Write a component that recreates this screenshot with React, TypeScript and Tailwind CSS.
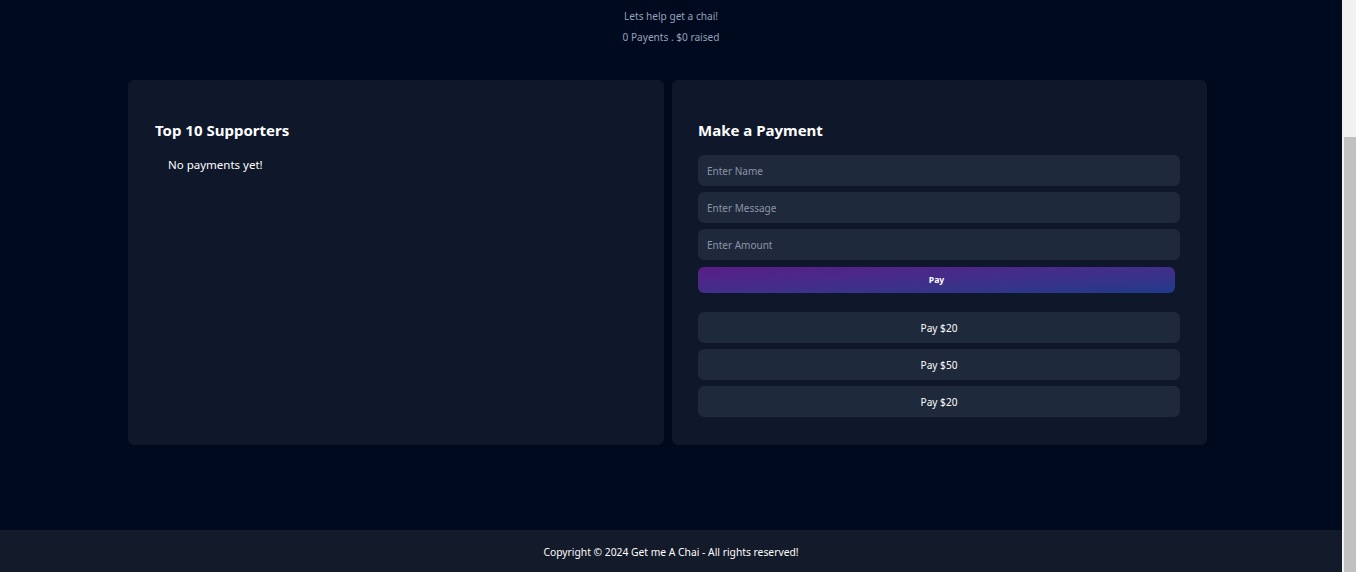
const font = { fontFamily: '"Noto Sans", "Open Sans", sans-serif' };

function Input({ placeholder }: { placeholder: string }) {
  return (
    <input
      placeholder={placeholder}
      className="w-full h-[31px] rounded-md bg-[#1e293b] px-[9px] text-[10px] text-white placeholder:text-[#8b95a5] outline-none"
    />
  );
}

function AmountButton({ label }: { label: string }) {
  return (
    <button className="w-full h-[31px] pt-[2px] rounded-md bg-[#1e293b] text-[10.1px] text-white">
      {label}
    </button>
  );
}

export default function App() {
  return (
    <div className="h-screen w-full flex overflow-hidden" style={font}>
      <div className="flex-1 flex flex-col bg-[#000a1f]">
        <div className="flex flex-col items-center text-[10.1px] text-[#94a3b8] pt-[8px] gap-[4px]">
          <p className="leading-[17px]">Lets help get a chai!</p>
          <p className="leading-[17px]">0 Payents . $0 raised</p>
        </div>

        <div className="flex gap-2 pl-[128px] mt-[34px]">
          <div className="w-[536px] h-[365px] rounded-md bg-[#0f172a] px-[27px] pt-[39px]">
            <h2 className="text-[15px] font-bold text-white leading-[22px]">Top 10 Supporters</h2>
            <ul className="pl-[13px] mt-[14px]">
              <li className="text-[11.5px] text-white leading-[20px]">No payments yet!</li>
            </ul>
          </div>

          <div className="w-[535px] h-[365px] rounded-md bg-[#0f172a] pl-[26px] pr-[27px] pt-[39px]">
            <h2 className="text-[15px] font-bold text-white leading-[22px]">Make a Payment</h2>
            <div className="flex flex-col gap-[6px] mt-[14px]">
              <Input placeholder="Enter Name" />
              <Input placeholder="Enter Message" />
              <Input placeholder="Enter Amount" />
              <button className="w-[477px] h-[26px] mt-[1px] rounded-md bg-gradient-to-br from-[#581c87] to-[#1e3a8a] text-[8.6px] font-bold text-white">
                Pay
              </button>
            </div>
            <div className="flex flex-col gap-[6px] mt-[19px]">
              <AmountButton label="Pay $20" />
              <AmountButton label="Pay $50" />
              <AmountButton label="Pay $20" />
            </div>
          </div>
        </div>

        <div className="flex-1" />

        <footer className="h-[42px] pt-[3px] bg-[#131a29] flex items-center justify-center text-[10.3px] text-white">
          Copyright © 2024 Get me A Chai - All rights reserved!
        </footer>
      </div>

      <aside className="w-[14px] bg-[#f1f1f1] flex flex-col justify-end">
        <div className="h-[435px] ml-[2px] bg-[#c1c1c1]" />
      </aside>
    </div>
  );
}
